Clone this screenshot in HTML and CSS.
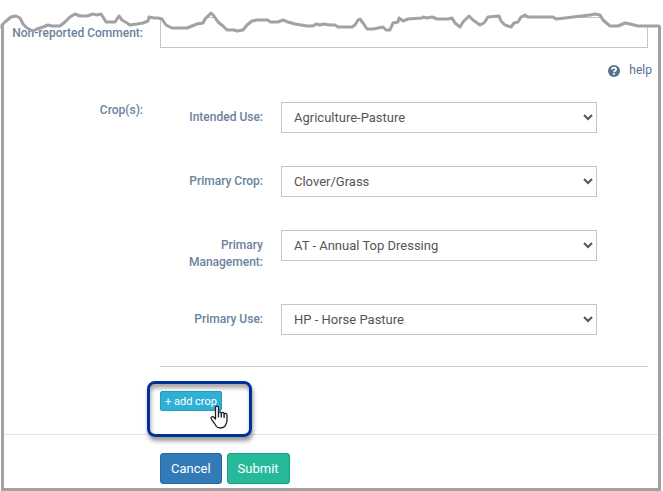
FILE: index.html
```html
<!DOCTYPE html>
<html lang="en">
<head>
  <meta charset="utf-8">
  <meta name="viewport" content="width=device-width, initial-scale=1">
  <title>Crops</title>
  <link rel="stylesheet" href="styles.css">
</head>
<body>
  <!-- torn top edge of the sheet -->
  <svg class="torn-edge" viewBox="0 0 663 40" preserveAspectRatio="none" aria-hidden="true">
    <path class="torn-mask" d="M0 0V26L2 26L5 22L11 17L16 16L20 18L23 24L27 28L33 31L37 29L43 27L48 25L52 26L60 26L65 22L70 17L75 14L80 16L87 16L93 14L97 15L101 14L103 17L106 22L115 22L119 16L122 20L127 23L130 25L137 24L143 23L148 21L149 17L154 18L158 18L162 19L166 25L172 28L187 28L192 26L197 24L203 23L205 19L208 16L211 13L214 16L218 22L223 26L227 30L234 30L237 31L243 30L247 25L252 21L257 20L268 20L270 22L278 22L283 20L288 22L295 24L307 26L313 26L316 24L320 25L323 24L330 25L335 25L338 27L352 27L355 25L358 20L360 19L363 23L367 29L373 29L383 27L386 30L390 30L393 23L398 22L399 18L403 21L408 19L422 18L423 17L427 18L432 17L437 19L448 19L452 18L455 23L460 27L463 22L469 16L473 20L480 25L484 23L488 17L499 16L501 21L505 25L511 27L514 23L518 22L521 17L525 15L528 17L553 17L556 19L565 18L573 17L590 15L595 14L600 15L603 20L610 26L618 26L625 23L630 24L638 26L648 26L653 26L663 26V0Z"/>
    <path class="torn-line" d="M2 29L2 25L5 22L11 17L16 16L20 18L23 24L27 28L33 31L37 29L43 27L48 25L52 26L60 26L65 22L70 17L75 14L80 16L87 16L93 14L97 15L101 14L103 17L106 22L115 22L119 16L122 20L127 23L130 25L137 24L143 23L148 21L149 17L154 18L158 18L162 19L166 25L172 28L187 28L192 26L197 24L203 23L205 19L208 16L211 13L214 16L218 22L223 26L227 30L234 30L237 31L243 30L247 25L252 21L257 20L268 20L270 22L278 22L283 20L288 22L295 24L307 26L313 26L316 24L320 25L323 24L330 25L335 25L338 27L352 27L355 25L358 20L360 19L363 23L367 29L373 29L383 27L386 30L390 30L393 23L398 22L399 18L403 21L408 19L422 18L423 17L427 18L432 17L437 19L448 19L452 18L455 23L460 27L463 22L469 16L473 20L480 25L484 23L488 17L499 16L501 21L505 25L511 27L514 23L518 22L521 17L525 15L528 17L553 17L556 19L565 18L573 17L590 15L595 14L600 15L603 20L610 26L618 26L625 23L630 24L638 26L648 26L653 26L659 26L660 29"/>
  </svg>

  <form class="sheet">
    <div class="form-row">
      <label class="row-label comment-label" for="comment">Non-reported Comment:</label>
      <div class="row-field">
        <input class="form-control" id="comment" type="text">
      </div>
    </div>

    <div class="help-row">
      <a class="help" href="#help">
        <svg class="help-icon" viewBox="0 0 12 12" aria-hidden="true">
          <circle cx="6" cy="6" r="6" fill="#56718f"/>
          <path d="M3.9 4.6C3.9 1.9 8.1 1.9 8.1 4.4C8.1 5.8 6.1 5.6 6.1 7.2" fill="none" stroke="#fff" stroke-width="1.8"/>
          <rect x="5.1" y="8.1" width="1.9" height="1.7" fill="#fff"/>
        </svg>
        help
      </a>
    </div>

    <div class="form-row crops">
      <div class="row-label">Crop(s):</div>
      <div class="row-field">
        <div class="crop-list">
          <div class="crop-row">
            <label for="intended-use">Intended Use:</label>
            <select class="form-control" id="intended-use">
              <option>Agriculture-Pasture</option>
            </select>
          </div>
          <div class="crop-row">
            <label for="primary-crop">Primary Crop:</label>
            <select class="form-control" id="primary-crop">
              <option>Clover/Grass</option>
            </select>
          </div>
          <div class="crop-row">
            <label for="primary-management">Primary Management:</label>
            <select class="form-control" id="primary-management">
              <option>AT - Annual Top Dressing</option>
            </select>
          </div>
          <div class="crop-row">
            <label for="primary-use">Primary Use:</label>
            <select class="form-control" id="primary-use">
              <option>HP - Horse Pasture</option>
            </select>
          </div>
        </div>
        <hr>
        <div class="add-crop">
          <button type="button" class="btn btn-info">+ add crop</button>
          <div class="highlight"></div>
          <svg class="pointer" viewBox="0 0 18 24" aria-hidden="true">
            <path d="M5.5 14V2.8C5.5 .6 8.5 .6 8.5 2.8V8.5C8.7 6.2 11.3 6.4 11.3 8.7C11.6 6.8 14.1 7 14.1 9.3C14.5 7.9 17 8.1 17 10.3V15.5C17 18 15.5 19.5 15 21.2C13.5 23.6 7.5 23.6 6.3 21.2C5.5 19.5 3.5 17.5 1.6 14.5C.2 12.2 2.5 10.8 4.1 12.5Z" fill="#fff" stroke="#1d1d2b" stroke-width="1.3" stroke-linejoin="round"/>
            <path d="M8.5 8.5V12.5M11.3 8.7V12.5M14.1 9.3V13" fill="none" stroke="#1d1d2b" stroke-width="1.3"/>
          </svg>
        </div>
      </div>
    </div>

    <div class="form-actions">
      <button type="button" class="btn btn-primary">Cancel</button>
      <button type="submit" class="btn btn-success">Submit</button>
    </div>
  </form>
</body>
</html>
```
FILE: styles.css
```css
* {
  box-sizing: border-box;
}
body {
  margin: 0;
  background-color: #fff;
  color: #555;
  font-family: Roboto, "Liberation Sans", sans-serif;
  font-size: 13px;
  line-height: 17px;
}
.sheet {
  margin: 0 2px 0 1px;
  padding-top: 17px;
  border: 3px solid #a2a2a2;
  border-top: 0;
}
/* the torn edge lies over the top of the sheet */
.torn-edge {
  position: absolute;
  top: 0;
  left: 0;
  width: 100%;
  height: 40px;
  pointer-events: none;
}
.torn-mask {
  fill: #fff;
}
.torn-line {
  fill: none;
  stroke: #a2a2a2;
  stroke-width: 3;
  stroke-linejoin: round;
}
.form-row {
  display: flex;
  gap: 17px;
  padding-right: 10px;
}
.row-label,
.crop-row label {
  color: #6b829e;
  font-size: 12px;
  font-weight: 500;
  text-align: right;
}
.row-label {
  flex: 0 0 139px;
}
.comment-label {
  padding-top: 8px;
  white-space: nowrap;
}
.row-field {
  flex: 1;
}
.form-control {
  display: block;
  width: 100%;
  height: 31px;
  padding: 0 8px;
  border: 1px solid #c5c5c9;
  border-radius: 0;
  background-color: #fff;
  color: #555;
  font-family: inherit;
  font-size: 13px;
}
.help-row {
  display: flex;
  justify-content: flex-end;
  margin: 14px 6px 23px 0;
}
.help {
  display: flex;
  align-items: center;
  gap: 9px;
  color: #56718f;
  font-size: 12px;
  text-decoration: none;
}
.help-icon {
  width: 12px;
  height: 12px;
}
.crop-list {
  display: flex;
  flex-direction: column;
  gap: 33px;
  padding-right: 51px;
}
.crop-row {
  display: flex;
  align-items: flex-start;
  gap: 18px;
}
.crop-row label {
  flex: 0 0 103px;
  padding-top: 7px;
}
.crop-row .form-control {
  flex: 1;
}
hr {
  margin: 31px 0 24px;
  border: 0;
  border-top: 1px solid #c9c9c9;
}
.add-crop {
  position: relative;
  display: flex;
  margin-bottom: 23px;
}
.highlight {
  position: absolute;
  top: -10px;
  left: -13px;
  width: 105px;
  height: 56px;
  border: 3px solid #00309c;
  border-radius: 8px;
  box-shadow: 1px 4px 4px rgba(0, 0, 0, 0.4), inset 1px 4px 4px rgba(0, 0, 0, 0.35);
  pointer-events: none;
}
.pointer {
  position: absolute;
  top: 14px;
  left: 50px;
  width: 18px;
  height: 24px;
}
.btn {
  height: 31px;
  padding: 0 10px;
  border: 1px solid;
  border-radius: 3px;
  color: #fff;
  font-family: inherit;
  font-size: 13px;
  font-weight: 400;
  cursor: pointer;
}
.btn-info {
  height: 20px;
  padding: 0 4px;
  background-color: #31b0d5;
  border-color: #269abc;
  border-radius: 2px;
  font-size: 11px;
}
.btn-primary {
  background-color: #337ab7;
  border-color: #2469a6;
}
.btn-success {
  background-color: #26b99a;
  border-color: #169f85;
}
.form-actions {
  display: flex;
  gap: 5px;
  padding: 18px 0 4px 156px;
  border-top: 1px solid #e2e2e2;
}
```
